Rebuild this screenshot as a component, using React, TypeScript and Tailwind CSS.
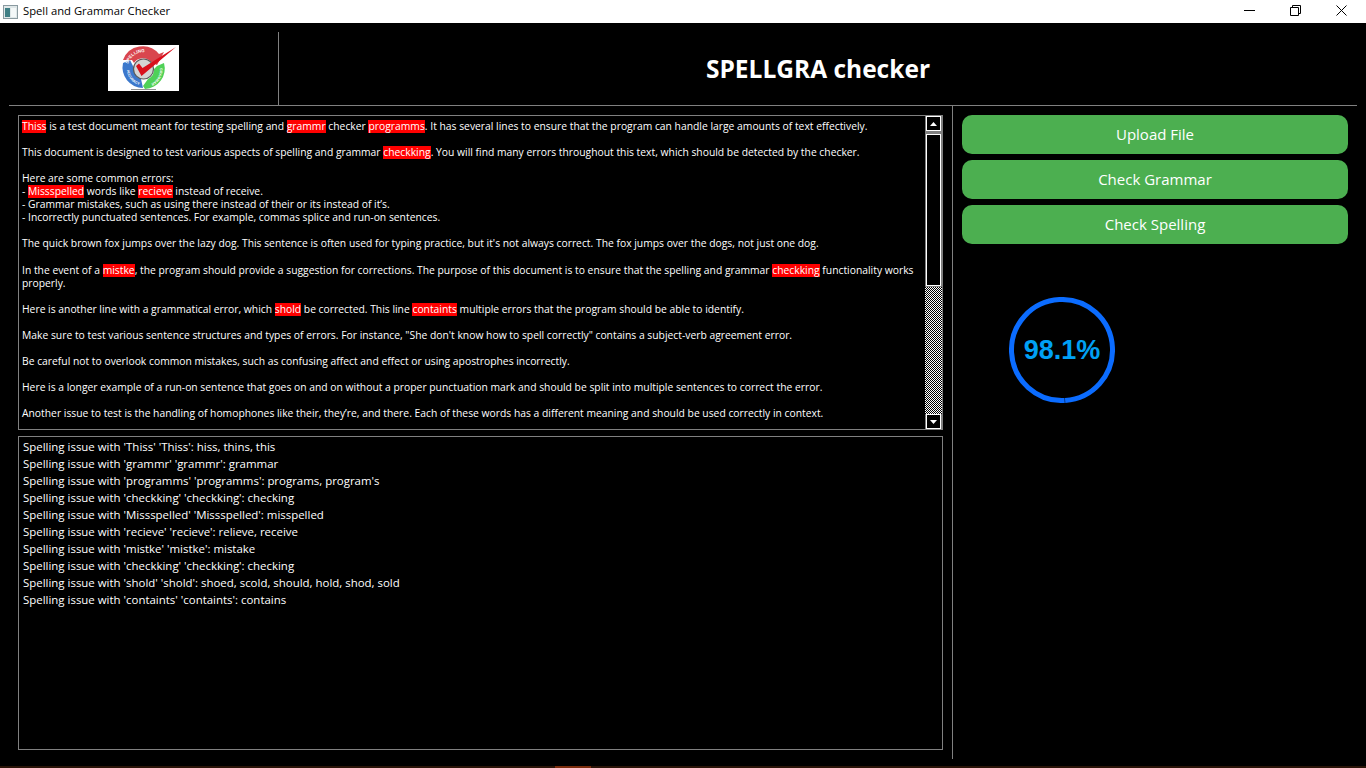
import React from 'react';

const FONT = "font-['Open_Sans','Noto_Sans',sans-serif]";

const documentLines = [
  "[[Thiss]] is a test document meant for testing spelling and [[grammr]] checker [[programms]]. It has several lines to ensure that the program can handle large amounts of text effectively.",
  "",
  "This document is designed to test various aspects of spelling and grammar [[checkking]]. You will find many errors throughout this text, which should be detected by the checker.",
  "",
  "Here are some common errors:",
  "- [[Missspelled]] words like [[recieve]] instead of receive.",
  "- Grammar mistakes, such as using there instead of their or its instead of it’s.",
  "- Incorrectly punctuated sentences. For example, commas splice and run-on sentences.",
  "",
  "The quick brown fox jumps over the lazy dog. This sentence is often used for typing practice, but it's not always correct. The fox jumps over the dogs, not just one dog.",
  " ",
  "In the event of a [[mistke]], the program should provide a suggestion for corrections. The purpose of this document is to ensure that the spelling and grammar [[checkking]] functionality works properly.",
  "",
  "Here is another line with a grammatical error, which [[shold]] be corrected. This line [[containts]] multiple errors that the program should be able to identify.",
  "",
  "Make sure to test various sentence structures and types of errors. For instance, \"She don't know how to spell correctly\" contains a subject-verb agreement error.",
  "",
  "Be careful not to overlook common mistakes, such as confusing affect and effect or using apostrophes incorrectly.",
  "",
  "Here is a longer example of a run-on sentence that goes on and on without a proper punctuation mark and should be split into multiple sentences to correct the error.",
  "",
  "Another issue to test is the handling of homophones like their, they’re, and there. Each of these words has a different meaning and should be used correctly in context.",
];

const issues = [
  "Spelling issue with 'Thiss' 'Thiss': hiss, thins, this",
  "Spelling issue with 'grammr' 'grammr': grammar",
  "Spelling issue with 'programms' 'programms': programs, program's",
  "Spelling issue with 'checkking' 'checkking': checking",
  "Spelling issue with 'Missspelled' 'Missspelled': misspelled",
  "Spelling issue with 'recieve' 'recieve': relieve, receive",
  "Spelling issue with 'mistke' 'mistke': mistake",
  "Spelling issue with 'checkking' 'checkking': checking",
  "Spelling issue with 'shold' 'shold': shoed, scold, should, hold, shod, sold",
  "Spelling issue with 'containts' 'containts': contains",
];

function DocLine({ text }: { text: string }) {
  if (text === '') return <div className="h-[13px]" />;
  // one blank line in the reference sits a pixel taller
  if (text === ' ') return <div className="h-[14px]" />;
  const parts = text.split(/\[\[|\]\]/);
  return (
    <div>
      {parts.map((part, i) =>
        i % 2 === 1 ? (
          <span key={i} className="inline-block h-[13px] bg-[#ff0000] leading-[13px]">
            {part}
          </span>
        ) : (
          <span key={i}>{part}</span>
        )
      )}
    </div>
  );
}

function ScrollButton({ up }: { up?: boolean }) {
  return (
    <div className="mx-px flex h-[15px] w-[15px] items-center justify-center border border-white bg-black shadow-[1px_1px_0_#808080]">
      <svg width="7" height="4" viewBox="0 0 7 4">
        <path d={up ? 'M3.5 0 7 4H0z' : 'M0 0h7L3.5 4z'} fill="#fff" />
      </svg>
    </div>
  );
}

function Scrollbar() {
  return (
    <div className="flex h-full w-[17px] flex-col bg-[#808080]">
      <ScrollButton up />
      <div className="mx-px mt-[3px] h-[152px] w-[15px] border border-white bg-black" />
      <div className="mt-px min-h-0 flex-1 bg-[repeating-conic-gradient(#fff_0_25%,#000_0_50%)] bg-[length:2px_2px]" />
      <ScrollButton />
    </div>
  );
}

function Logo() {
  return (
    <svg width="71" height="46" viewBox="0 0 71 46" className="bg-white">
      <defs>
        <path id="logo-top" d="M20 19 A16.5 16.5 0 0 1 51 17" />
        <path id="logo-right" d="M52 23 A16.5 16.5 0 0 1 40 40" />
        <path id="logo-left" d="M19 25 A16.5 16.5 0 0 0 31 40" />
      </defs>
      <path d="M15 15 A21 21 0 0 1 51 9 L56 7 L49 20 L43 17 A10.5 10.5 0 0 0 26 18 L24 15 Z" fill="#d9464e" />
      <path d="M22 15 L26 23 A10.5 10.5 0 0 0 33 34 L35 43 A20.5 20.5 0 0 1 15 18 Z" fill="#3c78cc" />
      <path d="M56 18 A20.5 20.5 0 0 1 37 44 L35 41 L40 34 A10.5 10.5 0 0 0 46 24 L49 21 Z" fill="#4fd158" />
      <circle cx="35.5" cy="24" r="10" fill="#d4d4d4" stroke="#5a5a5a" strokeWidth="1.2" />
      <text fontSize="4.4" fontWeight="700" fill="#fff" fontFamily="'Liberation Sans', sans-serif">
        <textPath href="#logo-top">SPELLING</textPath>
      </text>
      <text fontSize="3.6" fontWeight="700" fill="#fff" fontFamily="'Liberation Sans', sans-serif">
        <textPath href="#logo-right">GRAMMAR</textPath>
      </text>
      <text fontSize="3.6" fontWeight="700" fill="#fff" fontFamily="'Liberation Sans', sans-serif">
        <textPath href="#logo-left">ACCURACY</textPath>
      </text>
      <path d="M28 21 L33.5 31 L68 2 L34.5 23 L31 18.5 Z" fill="#d8101c" />
      <path d="M23 44.5h25" stroke="#777" strokeWidth="0.8" />
    </svg>
  );
}

function Gauge() {
  return (
    <div className="relative h-[106px] w-[106px]">
      <svg width="106" height="106" viewBox="0 0 106 106">
        <circle
          cx="53"
          cy="53"
          r="50.5"
          fill="none"
          stroke="#0b6cff"
          strokeWidth="5"
          strokeDasharray="316.3 1"
          transform="rotate(87 53 53)"
        />
      </svg>
      <div className="absolute inset-0 flex items-center justify-center font-['Liberation_Sans',Arial,sans-serif] text-[27px] font-bold text-[#00a0f5]">
        98.1%
      </div>
    </div>
  );
}

export default function App() {
  return (
    <div className={`flex h-screen flex-col overflow-hidden bg-black ${FONT}`}>
      {/* Title bar */}
      <div className="flex h-[23px] shrink-0 items-center bg-white pl-[3px] text-black">
        <svg width="15" height="14" viewBox="0 0 15 14" className="mr-[5px]">
          <rect x="0.5" y="0.5" width="14" height="13" fill="#dfe7e8" stroke="#8a9aa0" />
          <rect x="2" y="3" width="5" height="9" fill="#3f7f85" />
          <rect x="8" y="3" width="5" height="9" fill="#f4f8f8" />
        </svg>
        <span className="text-[11.25px]">Spell and Grammar Checker</span>
        <div className="ml-auto flex pb-[3px]">
          <div className="flex w-[46px] justify-center">
            <svg width="11" height="11" viewBox="0 0 11 11">
              <path d="M0 5.5h11" stroke="#000" />
            </svg>
          </div>
          <div className="flex w-[46px] justify-center">
            <svg width="11" height="11" viewBox="0 0 11 11" fill="none" stroke="#000">
              <path d="M.5 2.5h8v8h-8zM2.5 2.5v-2h8v8h-2" />
            </svg>
          </div>
          <div className="mr-[2px] flex w-[46px] justify-center">
            <svg width="11" height="11" viewBox="0 0 11 11" stroke="#000">
              <path d="M.5.5l10 10M10.5.5l-10 10" />
            </svg>
          </div>
        </div>
      </div>

      {/* Header */}
      <div className="mx-[9px] flex h-[83px] shrink-0 border-b border-[#808080] pt-[9px]">
        <div className="flex w-[270px] items-start justify-center border-r border-[#808080] pr-[1px] pt-[13px]">
          <Logo />
        </div>
        <div className="flex flex-1 items-center justify-center pt-[2px] text-[24.5px] font-bold text-white">
          SPELLGRA checker
        </div>
      </div>

      {/* Body */}
      <div className="mx-[9px] flex h-[653px] shrink-0">
        <div className="flex w-[944px] shrink-0 flex-col gap-[6px] border-r border-[#808080] pl-[9px] pr-[9px] pt-[9px]">
          <div className="flex h-[315px] shrink-0 border border-[#808080] text-[10.33px] leading-[13px] text-white">
            <div className="min-w-0 flex-1 overflow-hidden pl-[3px] pr-[10px] pt-[4px]">
              {documentLines.map((line, i) => (
                <DocLine key={i} text={line} />
              ))}
            </div>
            <Scrollbar />
          </div>
          <div className="h-[314px] shrink-0 border border-[#808080] pl-[4px] pt-[1px] text-[11.45px] leading-[17px] text-white">
            {issues.map((line, i) => (
              <div key={i}>{line}</div>
            ))}
          </div>
        </div>

        <div className="flex flex-1 flex-col pl-[9px] pt-[9px]">
          <div className="flex flex-col gap-[6px]">
            {['Upload File', 'Check Grammar', 'Check Spelling'].map((label) => (
              <button
                key={label}
                className="h-[39px] w-[386px] rounded-[10px] bg-[#4caf50] text-[15px] text-white"
              >
                {label}
              </button>
            ))}
          </div>
          <div className="ml-[47px] mt-[53px]">
            <Gauge />
          </div>
        </div>
      </div>

      {/* Edge of the taskbar under the window */}
      <div className="mt-auto flex h-[2px] bg-[#2a1408]">
        <div className="ml-[555px] w-[36px] bg-[#7a2c0c]" />
      </div>
    </div>
  );
}
